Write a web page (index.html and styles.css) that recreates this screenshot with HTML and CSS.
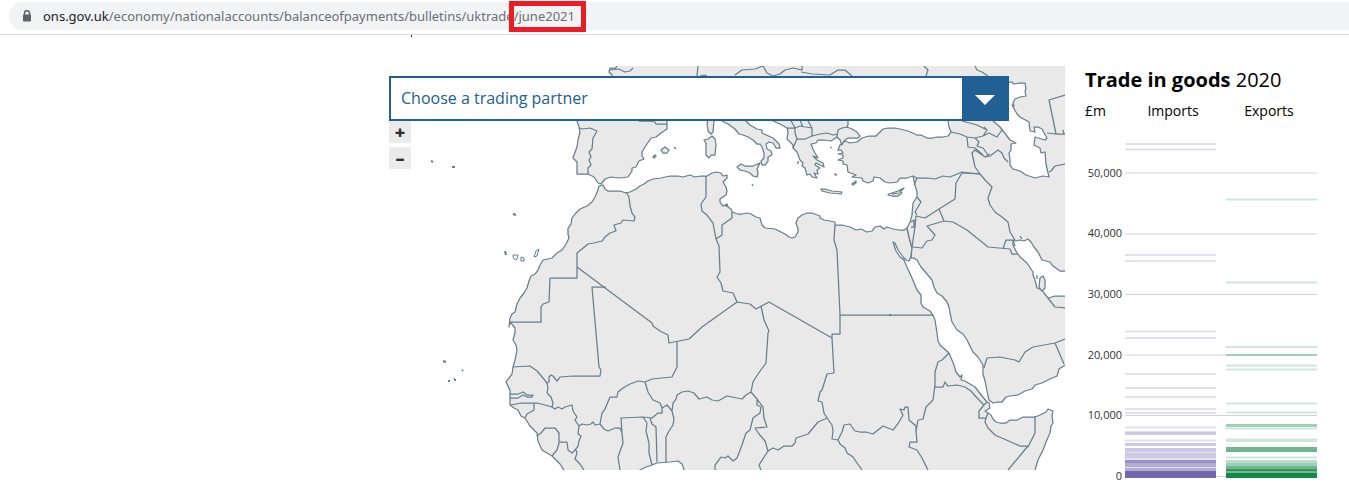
FILE: index.html
```
<!DOCTYPE html>
<html lang="en">
<head>
<meta charset="UTF-8" />
<meta name="viewport" content="width=device-width, initial-scale=1" />
<title>UK trade: June 2021</title>
<link rel="stylesheet" href="styles.css">
</head>
<body>
  <header class="browser-bar">
    <div class="address">
      <svg class="lock" viewBox="0 0 10 12" aria-hidden="true">
        <path d="M2.5 5V3.2a2.5 2.5 0 0 1 5 0V5" fill="none" stroke="#5f6368" stroke-width="1.5" />
        <rect x="1" y="4.500" width="8" height="7" rx="1" fill="#5f6368" />
      </svg>
      <span class="url"><b>ons.gov.uk</b>/economy/nationalaccounts/balanceofpayments/bulletins/uktrade<span class="highlight">/june2021</span></span>
    </div>
  </header>

  <main class="content">
    <section class="map" aria-label="Trading partner map">
      <svg class="map-canvas" viewBox="389 66 676 404" role="img" aria-label="Map of North Africa, Southern Europe and the Middle East">
        <!-- Mainland -->
        <g class="land">
          <path d="M1035 475V470L1038 460L1043 450L1046 442L1050 433L1051 426L1053 423L1052 416L1053 411L1048 409L1046 412L1040 415L1035 417L1030 417L1023 417L1017 420L1010 420L1006 423L1000 423L996 422L993 419L991 415L988 413L985 411L990 408L989 403L987 402L982 396L975 387L970 384L965 381L961 380L962 375L960 377L956 372L954 365L949 353L940 345L938 341L937 333L935 320L933 315L930 311L923 307L921 303L921 295L917 290L912 278L907 267L904 260L900 257L896 251L893 242L895 243L898 250L903 257L906 260L909 261L911 256L912 248L909 237L907 228L904 230L899 230L893 229L887 227L884 229L880 226L875 227L872 231L867 232L861 229L856 230L850 227L842 225L835 225L835 222L830 221L824 220L820 218L820 216L812 213L807 213L802 215L798 218L796 223L798 229L798 232L795 237L792 238L789 237L785 234L775 229L765 228L762 225L760 218L756 217L751 214L747 213L742 214L738 214L732 212L731 209L728 207L727 204L723 206L720 202L720 199L726 195L727 191L726 187L723 182L727 178V175L724 176L722 175L721 173L717 172L712 173L707 176L701 176L695 177L690 175L683 177L678 176L670 176L661 178L653 179L648 181L644 184L640 186L636 189L630 192L626 193L620 191L608 191L605 189L603 185L599 186L598 190L595 197L592 202L587 206L580 209L575 214L572 218L571 224L568 228L568 234L569 238L566 244L562 250L557 253L552 258L548 259L543 260L540 265L538 270L535 274L531 276L529 281L527 288L524 293L520 298L517 304L515 312L512 314L510 318L509 327L510 322L515 328L515 333L513 340L516 345L517 350L515 360L513 367L512 374L506 382L510 390L510 405L514 408L518 410L521 416L525 418L530 426L537 433L538 441L542 450L552 456L560 464L567 475H636L640 470L646 467L652 465L657 463L670 462L678 461L682 464L686 475Z" />
          <path d="M947 115L949 127L951 132L948 136L943 137L937 137L933 138L927 138L921 135L917 135L908 131L900 129L895 128L888 128L883 129L880 132L876 136L869 136L862 138L857 142L850 143L845 141L840 145L838 150L841 150L843 153L838 154L843 155V158L838 160L843 161V164L847 165L848 172L856 175L852 177L862 178L863 181L868 183L873 181L874 177L880 178L885 182L890 183L897 182L900 178L907 178L913 176L914 181L915 185L917 192L917 197L913 203L912 215L910 222L907 228L909 237L912 248L911 258L914 258L917 260L921 267L927 274L932 280L934 287L937 293L942 296L947 302L949 307L950 313L952 322L957 330L963 334L967 340L970 346L973 352L978 357L983 365L983 374L985 381L987 391L989 400L993 403L997 402L1002 402L1006 397L1010 396L1018 395L1025 391L1032 389L1035 385L1042 383L1050 379L1057 376L1059 369L1070 362V296H1062L1055 296L1048 298L1044 293L1042 290L1037 288L1035 280L1033 275L1033 272L1027 263L1020 257L1016 251L1013 245V240L1016 241L1020 240L1024 241L1028 239L1031 242L1034 247L1038 252L1042 260L1050 262L1053 266L1060 271H1070V60H618L616 68L610 68L609 72L612 75V82H947Z" />
          <path d="M577 115V121L579 127L580 132L578 140L577 147L574 155L573 158L577 162L577 174L588 174L594 177L598 183L601 184L605 179L611 177L619 178L628 177L632 171L632 168L636 167L639 161L644 159L642 156L642 152L645 147L651 138L656 137L661 133L667 129L667 115Z" />
          <path d="M722 121L728 124L735 129L739 134L743 135L748 137L753 140L757 144L760 144L762 147L764 153L764 158L761 161L762 165L765 165L768 161L768 157L772 155L771 151L767 149L766 144L769 142L773 143L776 148L780 148L779 144L773 138L762 133L762 130L757 129L750 125L746 121V115H722Z" />
          <path d="M773 115V121L780 124L787 128L788 132L787 139L793 145L793 148L797 152L800 160L803 163L802 166L805 168L807 175L810 174L812 177L817 178L814 173L818 174L817 170L820 168L815 165L816 163L820 165L824 167L823 163L817 160L813 156L818 158L815 153L813 149L811 144L816 143L818 140L824 140L831 141L837 137L840 140L842 145L844 141L848 138H858L860 136L857 132L852 129L847 127L848 125V115Z" />
        </g>
        <!-- Caspian Sea -->
        <g class="sea">
          <path d="M1004 82H1012L1014 84L1020 83L1025 83L1026 89L1025 91L1026 96L1020 97L1015 99L1013 103L1014 106L1012 105L1017 114L1020 117L1029 122L1030 131L1035 132L1034 127L1038 127L1042 129L1047 138L1045 140L1035 137L1034 145L1040 148L1041 153L1045 152L1046 164L1049 177L1043 176L1035 178L1026 175L1020 171L1013 169L1010 165V160L1009 153L1011 150L1011 144L1016 143L1010 140L1000 127L992 120Z" />
        </g>
        <!-- Islands -->
        <g class="land">
          <path d="M709 115L707 124L708 131L711 134L713 132L714 121Z" />
          <path d="M704 140L708 139L712 136L715 139L716 145L715 155L711 155L709 158L706 155L706 143Z" />
          <path d="M737 167L741 164L745 166H753L760 163L757 169L758 173L757 177L753 176L750 173L745 171L740 170Z" />
          <path d="M661 150L665 147L669 150L667 153H663ZM653 157L655 155L656 156L654 158ZM674 147L676 149" />
          <path d="M821 189L825 189L832 191L842 192L841 194L830 193L822 191Z" />
          <path d="M889 194L895 192L898 191L904 188L900 192L902 193L898 196L892 196L888 195ZM892 194L899 193" />
          <path d="M852 184L856 181L856 183L853 185ZM834 174H836V176M798 161V164M830 147L832 148M752 184L753 186" />
          <path d="M1040 278L1043 276L1045 280L1045 288L1042 291L1039 287ZM1037 275V279M1020 236L1022 239" />
        </g>
        <g class="small-isles">
          <path d="M431 161l2 1M452 167l3 0M513 214l3 1M505 251l1 4M443 361l3 1M462 370l1 1M448 381l2 0M889 315h2M725 205l2 1" />
          <path class="isle-ring" d="M513 255l5 0l-1 4l-2 1l-2-3ZM521 257l3 1l0 3l-3 0ZM534 257l2-6l3-2l-2 7ZM454 378l1 3l1-1Z" />
        </g>
        <!-- Borders: Africa -->
        <g class="line">
          <path d="M626 192L629 197L630 206L632 213L635 217L634 221L623 220L621 223L614 225L616 231L610 233L605 237L602 241L594 243L588 244L582 249L577 253V278H550L549 302L543 304L541 307V322H510" />
          <path d="M577 267L652 323L653 326L660 331L668 335L669 343L689 339L702 327L737 302L750 304L756 309L769 302L832 338V334H840V315L837 250L834 240L835 225M840 315H933" />
          <path d="M606 287H592L599 367L601 370L600 376H573L560 377L557 381L553 376L551 375L549 377L549 382L547 383L543 378L537 371L530 366L513 367" />
          <path d="M547 383L548 388L547 393L551 397L553 403L552 407L545 405L537 403L522 403L510 405M510 394L518 394L523 392L527 395L533 395L532 397L527 397L523 395L518 398L510 398M534 403L534 410L527 414L525 418" />
          <path d="M552 407L555 409L558 407L562 409L565 407L572 405L573 411L577 417L575 420L579 426L578 434L581 436L579 441L578 446L575 450L572 453L568 450L567 442H559V443L557 450L552 456M537 436L541 433L545 428H555L559 433V443M576 450L577 453L575 459L580 464L584 470" />
          <path d="M579 426L582 424L587 425L591 424L593 422L595 425L600 424L602 413L605 409L610 397L617 397L618 392L623 388L630 384L638 381L645 382L652 379L672 377L677 367V342" />
          <path d="M600 424L604 429L608 431L615 428L620 428L622 433L621 418L643 417L652 418L658 413L662 413V408L660 403L653 400L648 392L645 382M622 433L623 443L618 457L620 470M643 417L647 423L646 431L649 443V453L652 465M650 418L652 424L656 427L657 462" />
          <path d="M662 408L667 405L672 411L674 419L673 425L669 431L666 437V462M672 411L673 403L676 399L677 395L682 392L688 391L694 393L699 399L707 397L712 400L718 401L727 396L742 399L746 395L751 392" />
          <path d="M706 176V197L701 204L702 211L707 215L713 223L716 239L719 246L720 272L717 277L721 283L723 291L733 293L737 302M716 239L722 235V225L732 218V212" />
          <path d="M751 392L753 382L758 374L766 363L768 333L769 331L764 320L761 306M751 392L757 399L763 407L764 418L767 427L755 428L759 434L765 441L768 451L759 465L761 470M757 399L757 405L761 407L760 413L753 418L750 430L746 433L742 445L737 458L733 461L728 456L725 458L721 457L715 465V470" />
          <path d="M832 338L834 373L827 374L822 390L820 392L818 401L822 402L824 413L827 418L825 419L818 422L808 434L796 438L795 443L792 446L784 446L778 450L773 448L768 451" />
          <path d="M827 418L832 425L833 431L832 439L838 440L842 432L844 425L850 424L855 431L860 432L866 432L873 434L883 426L893 430L899 422L903 415L900 409L904 410L905 407L908 407L909 420L916 426L916 431L918 420L923 419L926 407L931 402L933 400L935 385L935 372L938 362L942 360L949 353M838 440L840 444L845 448L847 453L853 457L857 463L862 470" />
          <path d="M916 431L917 442H910L909 447L917 450L922 458L928 470M934 387L943 387L945 382L948 386L957 385L965 387L971 391L977 398L984 405L987 402M984 405L979 411V418L986 418L988 413M986 418L985 422L988 428L995 435L1020 446H1028L1008 470M1028 447L1035 433V416" />
        </g>
        <!-- Borders: Middle East, Europe and Asia -->
        <g class="line">
          <path d="M984 368L987 358L1000 357L1015 360L1019 362L1025 352L1033 347L1055 343L1065 339M1055 343L1064 364M1048 298L1055 307L1065 308" />
          <path d="M912 248L913 240L915 227L916 216L925 218L939 209L955 199L956 183L962 173L980 174M917 197L921 202L915 212L917 215M911 222L914 220V227H911" />
          <path d="M913 247L922 248L927 241L932 240L935 235L927 226L944 221L939 209M944 221L953 222L967 230L988 247L1010 249L1012 254H1017M1003 249L1006 240H1013M1013 240L1015 246" />
          <path d="M913 176L917 178L927 178L935 179L943 176L950 177L962 172L980 174L985 180L992 187L988 198L990 205L995 212L1002 217L1008 222L1010 232L1015 240M980 174L975 167L972 153L975 150L985 157L990 156L998 150L1002 153L1004 158L1008 162M917 178L914 185" />
          <path d="M951 132L960 134L967 137L975 138L983 136L987 130L977 125L962 121M967 137L968 147L975 148L983 155M975 138L979 142L977 146L983 148L988 155M983 136L989 133L997 137L1002 130M987 130L984 127M985 157L990 154" />
          <path d="M787 128L795 128L800 126L812 128V136L805 139H797L795 133L795 128M797 139L793 148M812 136L820 134L827 133L833 135L838 134M808 121L812 128M790 119L795 128M800 120L803 127M837 137L838 130L842 128L848 127" />
          <path d="M579 128L583 129L590 128L597 131L593 138L592 149L589 152L591 157L589 160L591 165L588 168L588 174M639 121L648 121L655 122L656 124L667 124" />
          <path d="M1065 95L1049 100L1056 134H1065M1047 133L1056 134M1063 130L1064 134M1049 172L1051 171L1055 166L1065 164" />
          <path d="M698 66L697 76M735 75L742 70L755 69L763 66L767 73L773 76L780 74L785 70L793 68L802 70V66M801 72L812 74L830 75L838 70L845 70L852 76M924 66L928 70L926 76M975 66L977 70L982 72L988 76M700 76l4-1l3 1M610 70l9-1l6 3l5-1l3-3" />
        </g>
      </svg>

      <div class="partner-select">
        <select aria-label="Choose a trading partner">
          <option>Choose a trading partner</option>
        </select>
        <span class="arrow" aria-hidden="true"></span>
      </div>
      <div class="zoom">
        <button type="button" aria-label="Zoom in">+</button>
        <button type="button" aria-label="Zoom out">–</button>
      </div>
    </section>

    <section class="trade">
      <h2><strong>Trade in goods</strong> 2020</h2>
      <div class="columns">
        <span>£m</span>
        <span>Imports</span>
        <span>Exports</span>
      </div>
      <svg class="chart" viewBox="0 130 232 352" role="img" aria-label="Imports and exports by trading partner, in £m">
        <g class="axis-lines">
          <path d="M40 173H232M40 234H232M40 294.500H232M40 355H232M40 415.500H232M40 476.500H232" />
        </g>
        <g class="axis-labels">
          <text x="37" y="177">50,000</text>
          <text x="37" y="237">40,000</text>
          <text x="37" y="298">30,000</text>
          <text x="37" y="359">20,000</text>
          <text x="37" y="419">10,000</text>
          <text x="37" y="480">0</text>
        </g>
        <g class="imports">
          <path d="M40 144H131M40 149.500H131M40 255H131M40 261H131M40 331.500H131M40 338H131M40 374H131M40 388H131M40 397H131M40 409H131M40 413H131M40 427.500H131M40 440.500H131" />
          <rect class="i1" x="40" y="431" width="91" height="1" />
          <rect class="i2" x="40" y="432" width="91" height="3" />
          <rect class="i2" x="40" y="443" width="91" height="3" />
          <rect class="i2" x="40" y="448" width="91" height="4" />
          <rect class="i1" x="40" y="452" width="91" height="8" />
          <rect class="i2" x="40" y="453" width="91" height="5" />
          <rect class="i4" x="40" y="460" width="91" height="3" />
          <rect class="i3" x="40" y="463" width="91" height="8" />
          <rect class="i1" x="40" y="467" width="91" height="1" />
          <rect class="i5" x="40" y="471" width="91" height="7" />
        </g>
        <g class="exports">
          <path d="M141 199.500H232M141 282.500H232M141 347H232M141 365.500H232M141 369.500H232M141 403.500H232M141 412.500H232M141 428.500H232M141 439.500H232M141 441H232M141 457.500H232" />
          <rect class="e3" x="141" y="354" width="91" height="2" />
          <rect class="e3" x="141" y="424" width="91" height="3" />
          <rect class="e4" x="141" y="447" width="91" height="5" />
          <rect class="e2" x="141" y="460" width="91" height="3" />
          <rect class="e3" x="141" y="463" width="91" height="3" />
          <rect class="e4" x="141" y="466" width="91" height="7" />
          <rect class="e5" x="141" y="469" width="91" height="2" />
          <rect class="e6" x="141" y="473" width="91" height="5" />
        </g>
      </svg>
    </section>
  </main>
</body>
</html>
```
FILE: styles.css
```
*, *::before, *::after {
  box-sizing: border-box;
}
body {
  margin: 0;
  background: #fff;
  color: #000;
  font-family: "Open Sans", "Noto Sans", sans-serif;
}

/* Address bar */
.browser-bar {
  height: 35px;
  padding: 2px 0 0 9px;
  border-bottom: 1px solid #dadce0;
}
.address {
  display: flex;
  align-items: center;
  gap: 11px;
  height: 28px;
  padding-left: 13px;
  background: #f1f3f4;
  border-radius: 14px 0 0 14px;
}
.lock {
  width: 10px;
  height: 12px;
}
.url {
  font-family: "Noto Sans", "Open Sans", sans-serif;
  font-size: 13px;
  line-height: 20px;
  color: #6b7075;
  white-space: nowrap;
}
.url b {
  font-weight: 400;
  color: #202124;
}
.highlight {
  position: relative;
}
.highlight::after {
  content: "";
  position: absolute;
  inset: -6px -11px -7px -5px;
  border: 5px solid #ed1c24;
}

/* Page */
.content {
  position: relative;
  display: grid;
  grid-template-columns: 1fr 232px;
  column-gap: 20px;
  padding: 31px 32px 0 389px;
}
/* tail of the line scrolled under the address bar */
.content::before {
  content: "";
  position: absolute;
  top: 0;
  left: 411px;
  width: 1px;
  height: 2px;
  background: #003c57;
}
.map {
  position: relative;
}
.map-canvas {
  display: block;
  width: 100%;
  height: auto;
}
.land path {
  fill: #e9e9e9;
}
.sea path {
  fill: #fff;
}
.line path,
.small-isles path {
  fill: none;
}
.map-canvas path {
  stroke: #667f8b;
  stroke-width: 1.25;
  stroke-linejoin: round;
}
.map-canvas .small-isles path {
  stroke-width: 2;
}
.map-canvas .small-isles .isle-ring {
  stroke-width: 1;
}

.partner-select {
  position: absolute;
  top: 10px;
  left: 0;
  width: calc(100% - 56px);
  height: 45px;
}
.partner-select select {
  appearance: none;
  width: 100%;
  height: 100%;
  padding: 0 56px 2px 10px;
  border: 2px solid #206095;
  border-radius: 0;
  background: #fff;
  color: #206095;
  font: 16px "Open Sans", "Noto Sans", sans-serif;
}
.arrow {
  position: absolute;
  top: 0;
  right: 0;
  display: flex;
  align-items: center;
  justify-content: center;
  width: 47px;
  height: 100%;
  padding: 2px 2px 0 0;
  background: #206095;
  pointer-events: none;
}
.arrow::before {
  content: "";
  border: 10px solid transparent;
  border-top-color: #fff;
  border-bottom: 0;
}
.zoom {
  position: absolute;
  top: 55px;
  left: 0;
  display: grid;
  gap: 4px;
}
.zoom button {
  width: 22px;
  height: 22px;
  padding: 0;
  border: 0;
  background: #ebebeb;
  color: #323132;
  font: 800 18px/20px "Open Sans", "Noto Sans", sans-serif;
}

/* Trade in goods */
.trade h2 {
  margin: 0;
  font-size: 20px;
  line-height: 28px;
  font-weight: 400;
}
.trade strong {
  font-weight: 700;
}
.columns {
  display: grid;
  grid-template-columns: 40px 1fr 1fr;
  margin: 6px 0 8px;
  font-size: 14px;
  line-height: 22px;
  text-align: center;
}
.columns span:first-child {
  text-align: left;
}
.chart {
  display: block;
  width: 100%;
  height: auto;
}
.axis-lines path {
  stroke: #d3d3d3;
}
.axis-labels text {
  font-size: 11px;
  fill: #323132;
  text-anchor: end;
}
.imports path {
  stroke: #e3e1ef;
  stroke-width: 2;
}
.exports path {
  stroke: #cfe7db;
  stroke-width: 2;
}
.i1 { fill: #e3e1ef; }
.i2 { fill: #cdc9e2; }
.i3 { fill: #b3add4; }
.i4 { fill: #988fc3; }
.i5 { fill: #7468ad; }
.e2 { fill: #b9dccb; }
.e3 { fill: #a0cfb7; }
.e4 { fill: #6fb791; }
.e5 { fill: #2f965b; }
.e6 { fill: #158848; }
```
